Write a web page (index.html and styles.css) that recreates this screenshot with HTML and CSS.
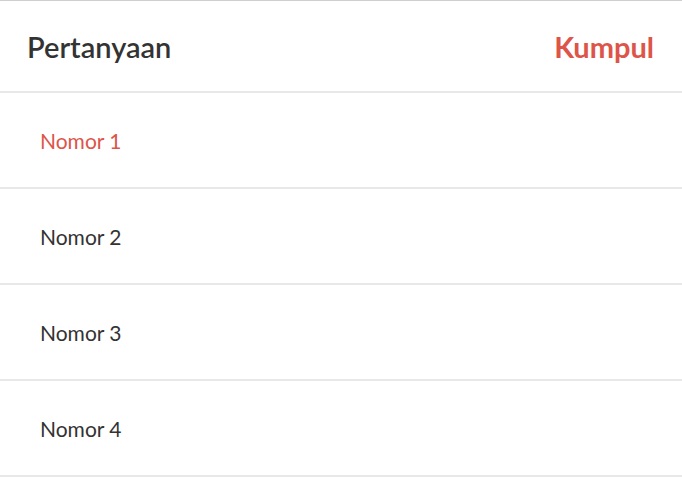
FILE: index.html
```html
<!DOCTYPE html>
<html lang="id">
<head>
<meta charset="utf-8">
<title>Pertanyaan</title>
<link rel="stylesheet" href="styles.css">
</head>
<body>
<div class="panel">
  <header class="head">
    <h1 class="title">Pertanyaan</h1>
    <a class="submit" href="#">Kumpul</a>
  </header>
  <ul class="list">
    <li class="item active">Nomor 1</li>
    <li class="item">Nomor 2</li>
    <li class="item">Nomor 3</li>
    <li class="item">Nomor 4</li>
  </ul>
</div>
</body>
</html>
```

FILE: styles.css
```css
* { box-sizing: border-box; }
html, body { margin: 0; padding: 0; background: #fff; }
body { font-family: Lato, "Noto Sans", sans-serif; color: #333; }
.panel { border-top: 1px solid #cfcfcf; }
.head {
  display: flex;
  align-items: center;
  justify-content: space-between;
  height: 92px;
  padding: 0 28px 0 27px;
  border-bottom: 2px solid #e8e8e8;
}
.title { margin: 0; font-size: 29px; font-weight: 600; color: #333; }
.submit { font-size: 29px; font-weight: 700; color: #dd5549; text-decoration: none; }
.list { list-style: none; margin: 0; padding: 0; }
.item {
  height: 96px;
  display: flex;
  align-items: center;
  padding-left: 40px;
  font-size: 21px;
  border-bottom: 2px solid #e8e8e8;
  color: #333;
}
.item.active { color: #dd5549; }
```
